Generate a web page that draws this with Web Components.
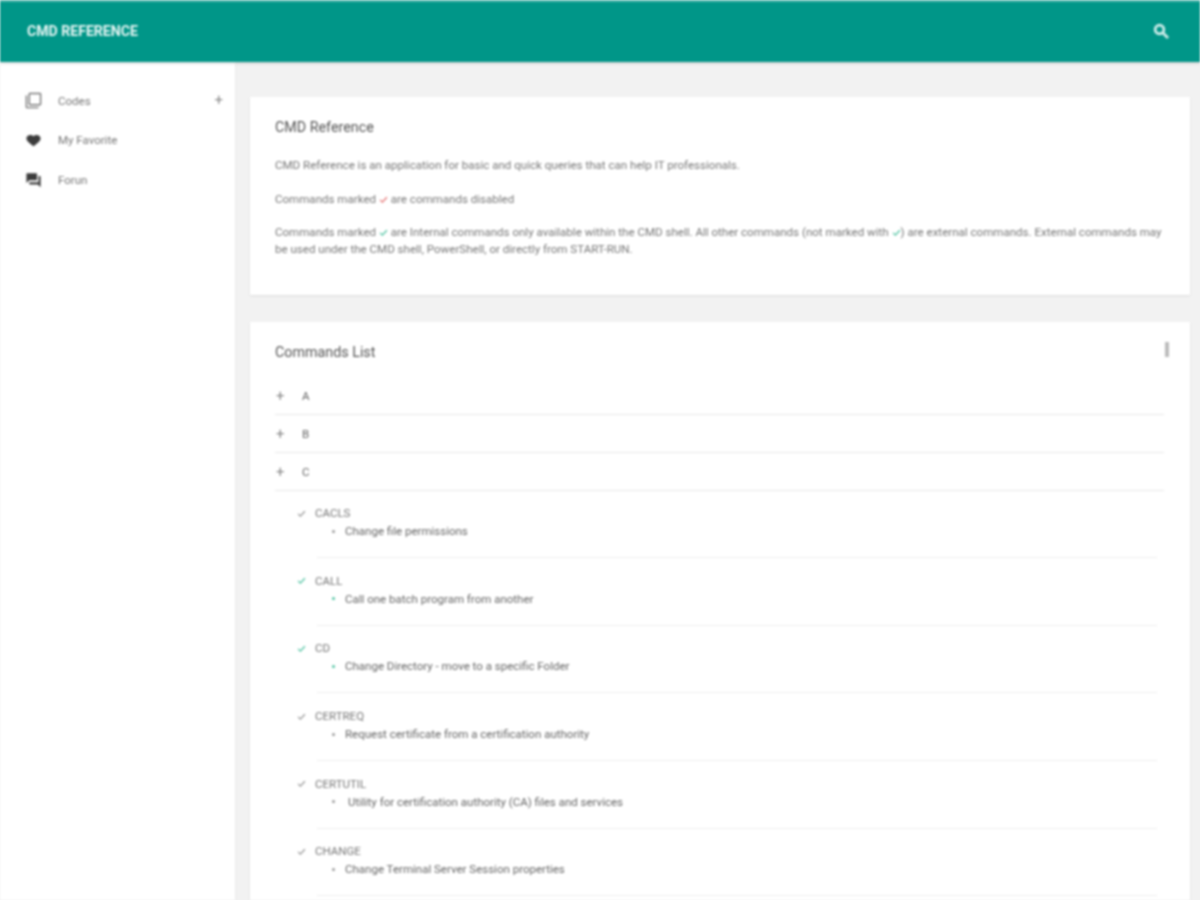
<!DOCTYPE html>
<html lang="en">
<head>
<meta charset="utf-8">
<title>CMD Reference</title>
<style>
  html, body { margin: 0; padding: 0; height: 100%; overflow: hidden; background: #f2f2f2; font-family: Roboto, "Liberation Sans", sans-serif; }
</style>
</head>
<body>
<cmd-app></cmd-app>

<script>
class AppHeader extends HTMLElement {
  constructor(){
    super();
    this.attachShadow({mode: 'open'});
    this.shadowRoot.innerHTML = `
    <style>
      :host {
        display: flex;
        align-items: center;
        justify-content: space-between;
        height: 62px;
        box-sizing: border-box;
        padding: 0 29px 1px 27px;
        background: #009688;
        border-top: 2px solid #4db6ac;
        box-shadow: 0 1px 3px rgba(0,0,0,.2);
        position: relative;
        z-index: 2;
      }
      .title { font-size: 14.1px; font-weight: 700; color: #e6f5f3; margin-top: -2px; }
      svg { display: block; }
    </style>
    <div class="title"><slot></slot></div>
    <svg width="19" height="19" viewBox="0 0 24 24" fill="#d2efec"><path d="M15.5 14h-.79l-.28-.27A6.47 6.47 0 0 0 16 9.5 6.5 6.5 0 1 0 9.5 16c1.61 0 3.09-.59 4.23-1.57l.27.28v.79l5 4.99L20.49 19l-4.99-5zm-6 0C7.01 14 5 11.99 5 9.5S7.01 5 9.5 5 14 7.01 14 9.5 11.99 14 9.5 14z" stroke="#d2efec" stroke-width="1.4"/></svg>
    `;
  }
}
customElements.define('app-header', AppHeader);

const navIcons = {
  copy: '<path d="M3 5H1v16c0 1.1.9 2 2 2h16v-2H3V5zm18-4H7c-1.1 0-2 .9-2 2v14c0 1.1.9 2 2 2h14c1.1 0 2-.9 2-2V3c0-1.1-.9-2-2-2zm0 16H7V3h14v14z"/>',
  heart: '<path d="M12 20l-1.45-1.1C5.4 15 2 12.3 2 9c0-2.7 2.42-4.8 5.5-4.8 1.74 0 3.41.7 4.5 1.8 1.09-1.1 2.76-1.8 4.5-1.8C19.58 4.2 22 6.3 22 9c0 3.3-3.4 6-8.55 9.9L12 20z"/>',
  forum: '<path d="M21 7h-2v9H6v2c0 .55.45 1 1 1h11l4 4V8c0-.55-.45-1-1-1zm-4 6V4c0-.55-.45-1-1-1H3c-.55 0-1 .45-1 1v13l4-4h10c.55 0 1-.45 1-1z"/>'
};

class NavItem extends HTMLElement {
  constructor(){
    super();
    this.attachShadow({mode: 'open'});
    const icon = navIcons[this.getAttribute('icon')];
    const fill = this.getAttribute('icon') === 'copy' ? '#777' : '#3c3c3c';
    const plus = this.hasAttribute('expand') ? '<span class="plus">+</span>' : '';
    this.shadowRoot.innerHTML = `
    <style>
      :host {
        display: flex;
        align-items: center;
        height: 39.5px;
        padding: 0 12px 0 25px;
        font-size: 11.5px;
        color: #777;
      }
      svg { flex: none; margin-right: 16px; }
      .label { flex: 1; }
      .plus { font-size: 15px; color: #888; line-height: 1; }
    </style>
    <svg width="17" height="17" viewBox="0 0 24 24" fill="${fill}">${icon}</svg>
    <span class="label"><slot></slot></span>${plus}
    `;
  }
}
customElements.define('nav-item', NavItem);

class SideNav extends HTMLElement {
  constructor(){
    super();
    this.attachShadow({mode: 'open'});
    this.shadowRoot.innerHTML = `
    <style>
      :host {
        display: block;
        flex: none;
        width: 235px;
        box-sizing: border-box;
        padding-top: 19px;
        background: #fff;
        box-shadow: 0 0 2px rgba(0,0,0,.08);
      }
    </style>
    <slot></slot>
    `;
  }
}
customElements.define('side-nav', SideNav);

class InfoCard extends HTMLElement {
  constructor(){
    super();
    this.attachShadow({mode: 'open'});
    const menu = this.hasAttribute('menu') ? '<span class="menu"></span>' : '';
    this.shadowRoot.innerHTML = `
    <style>
      :host {
        display: block;
        position: relative;
        box-sizing: border-box;
        padding: 22px 26px 22px 25px;
        background: #fff;
        box-shadow: 0 1px 2px rgba(0,0,0,.1);
      }
      h2 {
        margin: 0 0 21.8px;
        font-size: 14.3px;
        line-height: 16px;
        font-weight: 400;
        color: #555;
      }
      .menu {
        position: absolute;
        top: 20px;
        right: 21px;
        width: 4px;
        height: 15px;
        background: #bbb;
      }
    </style>
    <h2>${this.getAttribute('heading')}</h2>${menu}
    <slot></slot>
    `;
  }
}
customElements.define('info-card', InfoCard);

class CheckMark extends HTMLElement {
  constructor(){
    super();
    this.attachShadow({mode: 'open'});
    this.shadowRoot.innerHTML = `
    <style>
      :host { display: inline-block; vertical-align: -1px; width: 9px; height: 9px; }
      svg { display: block; }
    </style>
    <svg width="9" height="9" viewBox="0 0 24 24" fill="none" stroke="currentColor" stroke-width="3.4"><path d="M3 13l6 6L21 6"/></svg>
    `;
  }
}
customElements.define('check-mark', CheckMark);

class GroupRow extends HTMLElement {
  constructor(){
    super();
    this.attachShadow({mode: 'open'});
    this.shadowRoot.innerHTML = `
    <style>
      :host {
        display: flex;
        align-items: center;
        height: 38px;
        box-sizing: border-box;
        padding-top: 1px;
        border-bottom: 1px solid #e8e8e8;
        font-size: 11.5px;
        color: #666;
      }
      .plus { width: 26px; padding-left: 1px; font-size: 15px; color: #888; line-height: 1; }
    </style>
    <span class="plus">+</span><slot></slot>
    `;
  }
}
customElements.define('group-row', GroupRow);

class CommandItem extends HTMLElement {
  constructor(){
    super();
    this.attachShadow({mode: 'open'});
    const color = this.hasAttribute('internal') ? '#4fc3a1' : '#999';
    const pad = this.hasAttribute('indent') ? '3px' : '0';
    this.shadowRoot.innerHTML = `
    <style>
      :host {
        display: block;
        height: 67.7px;
        box-sizing: border-box;
        padding: 13px 7px 0 22px;
        font-size: 11.5px;
        color: #777;
      }
      .name { display: flex; align-items: center; line-height: 18px; }
      check-mark { color: ${color}; margin-right: 9px; }
      .desc { display: flex; align-items: center; line-height: 18px; padding-left: 35px; color: #666; }
      .dot { width: 3px; height: 3px; border-radius: 50%; background: ${color}; margin: 0 10px 0 0; flex: none; }
      .text { padding-left: ${pad}; }
      hr { border: 0; border-top: 1px solid #eee; margin: 17px 0 0 20px; }
    </style>
    <div class="name"><check-mark></check-mark><span>${this.getAttribute('name')}</span></div>
    <div class="desc"><span class="dot"></span><span class="text"><slot></slot></span></div>
    <hr>
    `;
  }
}
customElements.define('command-item', CommandItem);

class CmdApp extends HTMLElement {
  constructor(){
    super();
    this.attachShadow({mode: 'open'});
    this.shadowRoot.innerHTML = `
    <style>
      :host { display: flex; flex-direction: column; height: 100vh; overflow: hidden; filter: blur(.9px); }
      .body { flex: 1; display: flex; min-height: 0; }
      main { flex: 1; min-width: 0; display: flex; flex-direction: column; gap: 27px; padding: 35px 10px 0 15px; overflow: hidden; }
      p { margin: 0 -2px 16.4px 0; font-size: 11.55px; line-height: 17px; color: #777; }
      p:first-child { margin-bottom: 17px; }
      .first { height: 198px; flex: none; }
      .second { flex: none; }
      .red { color: #e57373; }
      .green { color: #4fc3a1; }
      .groups { margin-top: -4.8px; }
    </style>
    <app-header>CMD REFERENCE</app-header>
    <div class="body">
      <side-nav>
        <nav-item icon="copy" expand>Codes</nav-item>
        <nav-item icon="heart">My Favorite</nav-item>
        <nav-item icon="forum">Forun</nav-item>
      </side-nav>
      <main>
        <info-card class="first" heading="CMD Reference">
          <p>CMD Reference is an application for basic and quick queries that can help IT professionals.</p>
          <p>Commands marked <check-mark class="red"></check-mark> are commands disabled</p>
          <p>Commands marked <check-mark class="green"></check-mark> are Internal commands only available within the CMD shell. All other commands (not marked with <check-mark class="green"></check-mark>) are external commands. External commands may<br>be used under the CMD shell, PowerShell, or directly from START-RUN.</p>
        </info-card>
        <info-card class="second" heading="Commands List" menu>
          <div class="groups">
            <group-row>A</group-row>
            <group-row>B</group-row>
            <group-row>C</group-row>
            <command-item name="CACLS">Change file permissions</command-item>
            <command-item name="CALL" internal>Call one batch program from another</command-item>
            <command-item name="CD" internal>Change Directory - move to a specific Folder</command-item>
            <command-item name="CERTREQ">Request certificate from a certification authority</command-item>
            <command-item name="CERTUTIL" indent>Utility for certification authority (CA) files and services</command-item>
            <command-item name="CHANGE">Change Terminal Server Session properties</command-item>
          </div>
        </info-card>
      </main>
    </div>
    `;
  }
}
customElements.define('cmd-app', CmdApp);
</script>
</body>
</html>
